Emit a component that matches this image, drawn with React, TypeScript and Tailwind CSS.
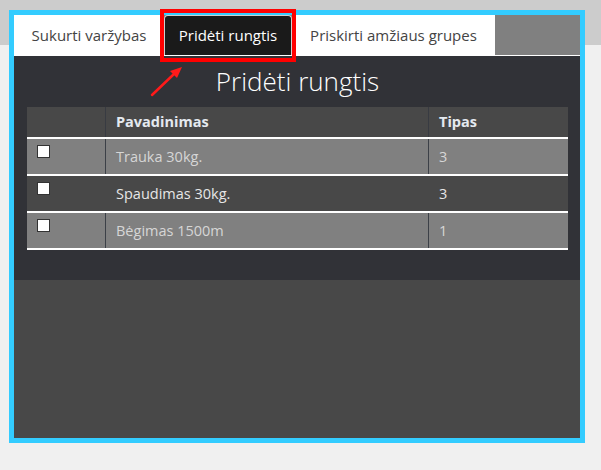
const rows = [
  { name: "Trauka 30kg.", type: "3", odd: true },
  { name: "Spaudimas 30kg.", type: "3", odd: false },
  { name: "Bėgimas 1500m", type: "1", odd: true },
];

function Checkbox() {
  return <span className="block mt-[6px] ml-[10px] w-[13px] h-[13px] bg-white border border-[#333]" />;
}

export default function App() {
  return (
    <div className="relative w-[601px] h-[470px] overflow-hidden bg-[#f0f0f0] font-['Open_Sans',sans-serif]">
      <div className="h-[45px] bg-[#cccccc]" />

      {/* Framed app */}
      <div className="-mt-[35px] ml-[9px] w-[576px] h-[433px] border-[5px] border-[#33ccff] bg-[#484848] flex flex-col">
        {/* Tabs */}
        <div className="h-[41px] flex bg-[#808080] border-b border-white shrink-0">
          <div className="w-[150px] bg-white flex items-center justify-center text-[15px] text-[#444]">
            Sukurti varžybas
          </div>
          <div className="w-[128px] bg-[#1a1a1a] border border-b-0 border-[#cfcfcf] rounded-t-[4px] flex items-center justify-center text-[15px] text-white">
            Pridėti rungtis
          </div>
          <div className="w-[203px] bg-white flex items-center justify-center text-[15px] text-[#444]">
            Priskirti amžiaus grupes
          </div>
        </div>

        {/* Panel */}
        <div className="bg-[#313237] pl-[13px] pr-[12px] pb-[30px]">
          <h1 className="h-[51px] flex items-center justify-center text-[26px] text-white font-light">Pridėti rungtis</h1>

          <div className="text-[14.5px]">
            <div className="grid grid-cols-[78px_323px_1fr] h-[32px] bg-[#484848] border-b-2 border-white font-bold text-[#e4e9ef]">
              <div />
              <div className="border-l border-[#383b42] pl-[10px] flex items-center">Pavadinimas</div>
              <div className="border-l border-[#383b42] pl-[10px] flex items-center">Tipas</div>
            </div>
            {rows.map((r) => (
              <div
                key={r.name}
                className={
                  r.odd
                    ? "grid grid-cols-[78px_323px_1fr] h-[37px] bg-[#808080] border-b-2 border-white text-[#d6d6d6]"
                    : "grid grid-cols-[78px_323px_1fr] h-[37px] bg-[#484848] border-b-2 border-white text-[#e6e6e6]"
                }
              >
                <div>
                  <Checkbox />
                </div>
                <div className={r.odd ? "border-l border-[#3c4047] pl-[10px] flex items-center" : "pl-[11px] flex items-center"}>
                  {r.name}
                </div>
                <div className={r.odd ? "border-l border-[#3c4047] pl-[10px] flex items-center" : "pl-[11px] flex items-center"}>
                  {r.type}
                </div>
              </div>
            ))}
          </div>
        </div>
      </div>

      {/* Annotation: highlight box and arrow */}
      <div className="absolute left-[160px] top-[9px] w-[136px] h-[53px] border-4 border-[#ff0000]" />
      <svg className="absolute left-0 top-0" width="601" height="470">
        <line x1="152" y1="95" x2="174" y2="74" stroke="#ff1a1a" strokeWidth="2.5" strokeLinecap="round" />
        <polygon points="182,67 170,71 177,78" fill="#ff1a1a" />
      </svg>
    </div>
  );
}
